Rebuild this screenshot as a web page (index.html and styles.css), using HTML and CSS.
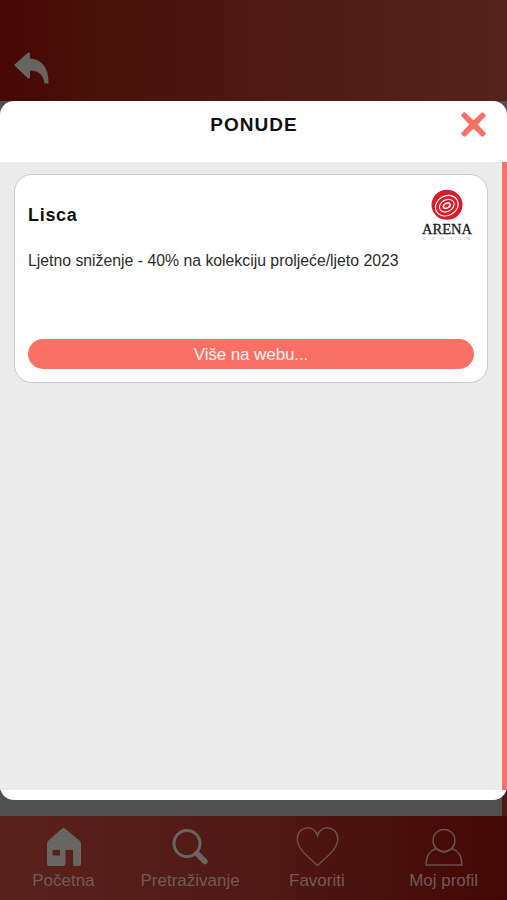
FILE: index.html
```html
<!DOCTYPE html>
<html lang="hr">
<head>
<meta charset="utf-8">
<title>Ponude</title>
<link rel="stylesheet" href="styles.css">
</head>
<body>
<div class="app">
  <header class="topbar">
    <svg class="back" viewBox="0 0 35 33"><path d="M0 13 13.500 1Q16 -.5 16 2V6.500C27 7 35 15 34.500 31.500H30.500C30 23 24 18.500 16 18.500V25Q15.500 27.500 13 25.500Z"/></svg>
  </header>
  <main class="stage">
    <section class="modal">
      <div class="modal-head">
        <h1>PONUDE</h1>
        <svg class="close" viewBox="-.5 -.5 25 25"><path d="M2.500 .5Q3 .2 3.500 .7L12 8.800 20.500 .7Q21 .2 21.500 .7L23.300 2.500Q23.800 3 23.300 3.500L15.200 12 23.300 20.500Q23.800 21 23.300 21.500L21.500 23.300Q21 23.800 20.500 23.300L12 15.200 3.500 23.300Q3 23.800 2.500 23.300L.7 21.500Q.2 21 .7 20.500L8.800 12 .7 3.500Q.2 3 .7 2.500Z"/></svg>
      </div>
      <div class="list">
        <article class="card">
          <div class="card-head">
            <h2>Lisca</h2>
            <div class="logo">
              <svg viewBox="0 0 32 31"><ellipse cx="16" cy="15.800" rx="15.500" ry="15" fill="#d91c2b"/><g fill="none" stroke="#fff" stroke-width="1.100" transform="rotate(-28 16 16)"><ellipse cx="15.500" cy="16.500" rx="11.800" ry="9.800"/><ellipse cx="15.500" cy="16.500" rx="7.800" ry="5.800"/><ellipse cx="15.500" cy="16.500" rx="3.600" ry="2.300" stroke-width="1.500"/></g></svg>
              <span class="logo-name">ARENA</span>
              <span class="logo-sub">CENTAR</span>
            </div>
          </div>
          <p>Ljetno sniženje - 40% na kolekciju proljeće/ljeto 2023</p>
          <a class="more">Više na webu...</a>
        </article>
      </div>
      <div class="modal-foot"></div>
    </section>
  </main>
  <nav class="tabs">
    <div class="tab solid">
      <svg viewBox="0 0 40 40"><path fill-rule="evenodd" d="M19 1.500Q20.500 .2 22 1.500L37 14Q38 15 38 17V37Q38 39 36 39H32Q30 39 30 37V23H22.500V36Q22.500 39 19.500 39H6Q4 39 4 37V17Q4 15 5 14ZM9.500 23V28.500H17V23Z"/></svg>
      <span>Početna</span>
    </div>
    <div class="tab search">
      <svg viewBox="0 0 40 40"><circle cx="17" cy="16.500" r="13"/><path d="M27 26.500 35 34.500" stroke-width="5.500" stroke-linecap="round"/></svg>
      <span>Pretraživanje</span>
    </div>
    <div class="tab dim">
      <svg viewBox="0 0 44 40"><path d="M22.500 38.500C14.500 31 2.500 22 2.200 12.500C2-1.500 19.500-3 22.500 8.500C25.500-3 43-1.500 42.800 12.500C42.500 22 30.500 31 22.500 38.500Z"/></svg>
      <span>Favoriti</span>
    </div>
    <div class="tab dim">
      <svg viewBox="0 0 40 40"><circle cx="20" cy="13.500" r="11"/><path d="M12 21.500C5 24 2 30 2 38H38C38 30 35 24 28 21.500Q20 28.500 12 21.500Z"/></svg>
      <span>Moj profil</span>
    </div>
  </nav>
</div>
</body>
</html>
```
FILE: styles.css
```css
* { box-sizing: border-box; }
body { margin: 0; font-family: "Liberation Sans", Arial, sans-serif; }
h1, h2, p { margin: 0; }
svg { display: block; }
.app { display: flex; flex-direction: column; height: 900px; overflow: hidden; }
.topbar { height: 101px; flex: none; padding: 52px 0 0 14px; background: linear-gradient(90deg, #470704 0%, #491009 17%, #501a16 60%, #56221d 100%); }
.back { width: 35px; height: 33px; fill: #686460; }
.stage { flex: 1; background: #505050 linear-gradient(90deg, #505050 502px, #4e1815 502px) bottom / 100% 30px no-repeat; }
.modal { display: flex; flex-direction: column; height: 699px; border-radius: 14px; background: #fff; overflow: hidden; }
.modal-head { display: grid; grid-template-columns: 1fr auto 1fr; height: 61px; flex: none; padding-top: 11px; }
.modal-head h1 { grid-column: 2; font-size: 19px; line-height: 26px; letter-spacing: 1px; color: #111; margin-left: 1px; }
.close { justify-self: end; width: 25px; height: 25px; margin-right: 21px; fill: #fb7065; stroke: #fb7065; stroke-width: 1.500; stroke-linejoin: round; }
.list { flex: 1; padding: 12px 14px; background: #ebebeb; border-right: 5px solid #fb7065; }
.card { display: flex; flex-direction: column; width: 474px; height: 209px; padding: 13px; border: 1px solid #cacaca; border-radius: 18px; background: #fff; }
.card-head { display: flex; justify-content: space-between; height: 58px; }
.card h2 { font-size: 18px; line-height: 24px; letter-spacing: .7px; color: #111; margin-top: 15px; }
.logo { display: flex; flex-direction: column; align-items: center; width: 54px; padding-top: 1px; }
.logo svg { width: 32px; height: 31px; }
.logo-name { margin-top: 2px; font: 14.500px/15px "Liberation Serif", serif; color: #1a1a1a; -webkit-text-stroke: .3px #1a1a1a; }
.logo-sub { font: 5px/5px "Liberation Serif", serif; letter-spacing: 5.500px; margin: -1px -5px 0 0; color: #b4b4b4; }
.card p { font-size: 15.800px; line-height: 20px; margin-top: 5px; color: #2c2c2c; white-space: nowrap; }
.more { display: block; height: 30px; margin-top: auto; border-radius: 16px; background: #fb7065; color: #fff0ee; font-size: 17px; line-height: 31px; text-align: center; letter-spacing: -.1px; }
.modal-foot { height: 10px; flex: none; }
.tabs { display: grid; grid-template-columns: repeat(4, 1fr); height: 84px; flex: none; padding-top: 11px; background: linear-gradient(90deg, #5a211d 0%, #521a16 45%, #4a100d 75%, #430803 100%); }
.tab { display: flex; flex-direction: column; align-items: center; color: #705b57; font-size: 17px; }
.tab svg { height: 40px; width: 40px; overflow: visible; fill: none; stroke: #686663; stroke-width: 3; }
.tab span { line-height: 22px; margin-top: 3px; }
.solid svg { fill: #686663; stroke: none; }
.dim svg { width: 44px; stroke: #6e5049; stroke-width: 1.500; }
```
